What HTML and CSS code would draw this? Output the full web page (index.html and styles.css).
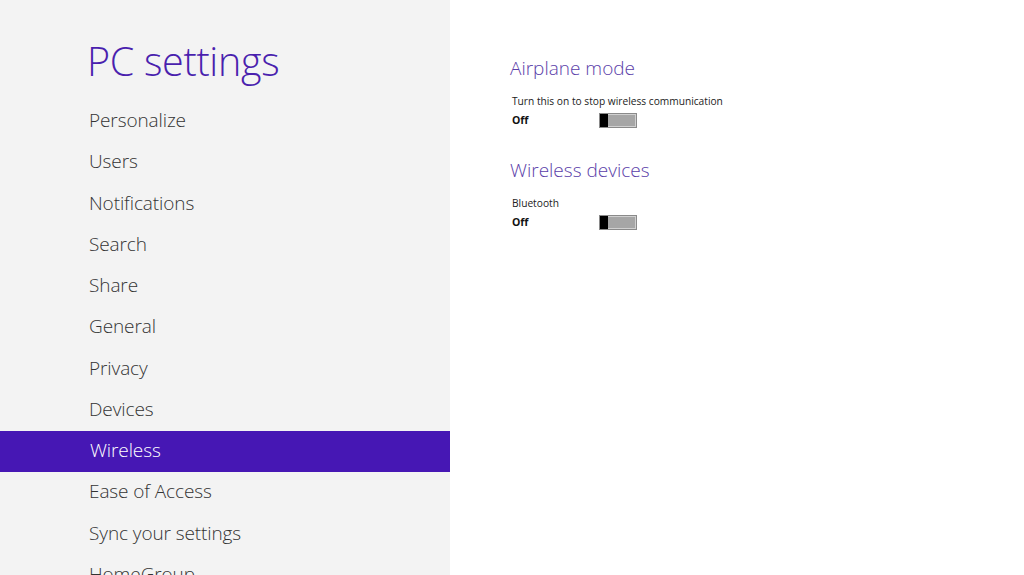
FILE: index.html
```html
<!DOCTYPE html>
<html lang="en">
<head>
<meta charset="utf-8">
<title>PC settings</title>
<link rel="stylesheet" href="styles.css">
</head>
<body>
<div class="screen">
  <nav class="sidebar">
    <h1 class="title">PC settings</h1>
    <ul class="menu">
      <li class="item">Personalize</li>
      <li class="item">Users</li>
      <li class="item">Notifications</li>
      <li class="item">Search</li>
      <li class="item">Share</li>
      <li class="item">General</li>
      <li class="item">Privacy</li>
      <li class="item">Devices</li>
      <li class="item selected">Wireless</li>
      <li class="item">Ease of Access</li>
      <li class="item">Sync your settings</li>
      <li class="item">HomeGroup</li>
    </ul>
  </nav>
  <main class="content">
    <section class="group">
      <h2 class="group-title">Airplane mode</h2>
      <div class="setting">
        <div class="label">Turn this on to stop wireless communication</div>
        <div class="toggle-row">
          <span class="state">Off</span>
          <span class="toggle"><span class="thumb"></span></span>
        </div>
      </div>
    </section>
    <section class="group">
      <h2 class="group-title">Wireless devices</h2>
      <div class="setting">
        <div class="label">Bluetooth</div>
        <div class="toggle-row">
          <span class="state">Off</span>
          <span class="toggle"><span class="thumb"></span></span>
        </div>
      </div>
    </section>
  </main>
</div>
</body>
</html>
```

FILE: styles.css
```css
html, body {
  margin: 0;
  padding: 0;
  height: 100%;
  overflow: hidden;
  background: #ffffff;
  font-family: "Open Sans", "Noto Sans", "Liberation Sans", sans-serif;
}

.screen {
  display: flex;
  height: 575px;
  width: 1024px;
}

.sidebar {
  width: 450px;
  flex: none;
  background: #f3f3f3;
  overflow: hidden;
}

.title {
  margin: 0;
  padding: 36px 0 0 87px;
  height: 65px;
  font-size: 39.5px;
  font-weight: 300;
  line-height: 50px;
  color: #4a1fae;
  letter-spacing: -0.3px;
}

.menu {
  list-style: none;
  margin: 0;
  padding: 0;
}

.item {
  height: 41.25px;
  line-height: 39px;
  padding-left: 89px;
  font-size: 19px;
  font-weight: 300;
  color: #333333;
  white-space: nowrap;
  letter-spacing: -0.1px;
}

.item.selected {
  background: #4617b4;
  color: #ffffff;
  padding-left: 90px;
}

.content {
  flex: 1;
  padding: 53px 0 0 60px;
}

.group {
  margin-bottom: 24px;
}

.group-title {
  margin: 0;
  font-size: 19px;
  font-weight: 300;
  line-height: 30px;
  color: #5b3ea9;
}

.setting {
  padding: 10px 0 0 2px;
}

.label {
  font-size: 10.2px;
  line-height: 16px;
  color: #222222;
}

.toggle-row {
  display: flex;
  align-items: center;
  height: 22px;
}

.state {
  width: 87px;
  font-size: 10.5px;
  font-weight: 700;
  color: #111111;
}

.toggle {
  display: flex;
  width: 38px;
  height: 15px;
  box-sizing: border-box;
  border: 2px solid #d0d0d0;
  background: #a6a6a6;
  outline: 1px solid #8a8a8a;
  outline-offset: -1px;
}

.thumb {
  width: 9px;
  height: 15px;
  margin: -2px 0 0 -2px;
  background: #000000;
}
```
